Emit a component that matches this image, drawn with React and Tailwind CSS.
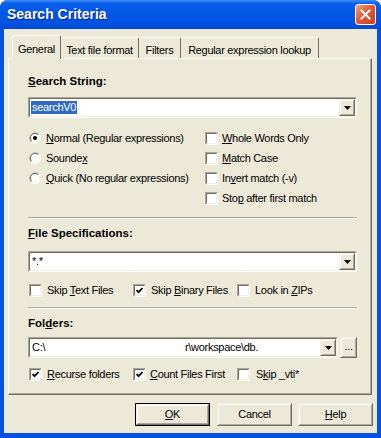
import React from 'react';

function Sunken({ className = '', children }) {
  return (
    <div className={`border border-t-[#ACA899] border-l-[#ACA899] border-b-white border-r-white ${className}`}>
      <div className="h-full w-full border border-t-[#716F64] border-l-[#716F64] border-b-[#F1EFE2] border-r-[#F1EFE2] bg-white">
        {children}
      </div>
    </div>
  );
}

function Raised({ className = '', children }) {
  return (
    <div className={`border border-t-[#F1EFE2] border-l-[#F1EFE2] border-b-[#716F64] border-r-[#716F64] bg-[#ECE9D8] ${className}`}>
      <div className="flex h-full w-full items-center justify-center border border-t-white border-l-white border-b-[#ACA899] border-r-[#ACA899]">
        {children}
      </div>
    </div>
  );
}

function Arrow() {
  return (
    <svg width="7" height="4" viewBox="0 0 7 4">
      <polygon points="0,0 7,0 3.5,4" fill="#000" />
    </svg>
  );
}

function Combo({ className = '', children }) {
  return (
    <Sunken className={`h-[21px] ${className}`}>
      <div className="flex h-full items-center">
        <div className="flex h-full flex-1 items-center overflow-hidden pl-[1px]">{children}</div>
        <Raised className="h-[17px] w-[16px]">
          <Arrow />
        </Raised>
      </div>
    </Sunken>
  );
}

function Radio({ checked }) {
  return (
    <svg width="12" height="12" viewBox="0 0 12 12" className="shrink-0">
      <circle cx="6" cy="6" r="6" fill="#fff" />
      <path d="M10.24 1.76 A6 6 0 0 0 1.76 10.24 Z" fill="#ACA899" />
      <circle cx="6" cy="6" r="5" fill="#F1EFE2" />
      <path d="M9.54 2.46 A5 5 0 0 0 2.46 9.54 Z" fill="#716F64" />
      <circle cx="6" cy="6" r="4" fill="#fff" />
      {checked && <circle cx="6" cy="6" r="2" fill="#000" />}
    </svg>
  );
}

function Check({ checked }) {
  return (
    <Sunken className="h-[13px] w-[13px] shrink-0">
      <div className="flex h-full w-full items-center justify-center">
        {checked && (
          <svg width="7" height="7" viewBox="0 0 7 7">
            <polyline points="0.5,3 2.5,5.2 6.5,1" fill="none" stroke="#000" strokeWidth="1.8" />
          </svg>
        )}
      </div>
    </Sunken>
  );
}

function Separator() {
  return <div className="h-[2px] border-t border-t-[#ACA899] border-b border-b-white" />;
}

export default function App() {
  return (
    <div className="flex h-[438px] w-[381px] flex-col overflow-hidden rounded-t-[8px] bg-[#0352E0] font-['Liberation_Sans',Arial,sans-serif] text-[11px] tracking-[-0.3px] text-black">
      {/* title bar */}
      <div className="flex h-[29px] shrink-0 items-center justify-between bg-[linear-gradient(to_bottom,#3C8FF7_0%,#0A5FEA_12%,#0058E6_40%,#0054E3_75%,#0049D3_100%)] pl-[7px] pr-[5px]">
        <span className="text-[14px] font-bold tracking-normal text-white [text-shadow:1px_1px_0_#0A1F8C]">Search Criteria</span>
        <div className="flex h-[21px] w-[21px] items-center justify-center rounded-[3px] border border-white bg-[linear-gradient(135deg,#F5A283_0%,#E35A35_45%,#C9401E_100%)]">
          <svg width="11" height="11" viewBox="0 0 11 11">
            <path d="M1.5 1.5 L9.5 9.5 M9.5 1.5 L1.5 9.5" stroke="#fff" strokeWidth="2" strokeLinecap="square" />
          </svg>
        </div>
      </div>

      {/* client area */}
      <div className="mx-[4px] flex h-[404px] flex-col bg-[#ECE9D8]">
        {/* tab strip */}
        <div className="mt-[6px] flex h-[23px] items-end pl-[8px]">
          <div className="relative z-10 -mb-px flex h-[24px] w-[49px] items-start justify-center rounded-t-[2px] border-t border-l border-t-white border-l-white border-r border-r-[#716F64] bg-[#ECE9D8] pt-[5px]">
            General
          </div>
          <div className="flex h-[21px] w-[78px] items-start justify-center rounded-t-[2px] border-t border-t-white border-r border-r-[#716F64] pt-[4px]">
            Text file format
          </div>
          <div className="flex h-[21px] w-[42px] items-start justify-center rounded-t-[2px] border-t border-t-white border-r border-r-[#716F64] pt-[4px]">
            Filters
          </div>
          <div className="flex h-[21px] w-[138px] items-start justify-center rounded-t-[2px] border-t border-t-white border-r border-r-[#716F64] pt-[4px]">
            Regular expression lookup
          </div>
        </div>

        {/* tab panel */}
        <div className="ml-[4px] flex h-[337px] w-[364px] flex-col border border-t-white border-l-white border-r-[#716F64] border-b-[#716F64] pl-[19px] pr-[14px] shadow-[inset_-1px_-1px_0_#ACA899]">
          <div className="mt-[15px] h-[14px] text-[11.5px] font-bold leading-[14px] tracking-normal">
            <u>S</u>earch String:
          </div>
          <Combo className="mt-[9px]">
            <span className="bg-[#316AC5] px-[1px] leading-[13px] text-white">searchV0</span>
          </Combo>

          <div className="mt-[10px] flex">
            <div className="flex w-[177px] flex-col">
              <div className="flex h-[20px] items-center pl-[1px]">
                <Radio checked />
                <span className="ml-[5px]"><u>N</u>ormal (Regular expressions)</span>
              </div>
              <div className="flex h-[20px] items-center pl-[1px]">
                <Radio />
                <span className="ml-[5px]">Sounde<u>x</u></span>
              </div>
              <div className="flex h-[20px] items-center pl-[1px]">
                <Radio />
                <span className="ml-[5px]"><u>Q</u>uick (No regular expressions)</span>
              </div>
            </div>
            <div className="flex flex-col">
              <div className="flex h-[20px] items-center">
                <Check />
                <span className="ml-[4px]"><u>W</u>hole Words Only</span>
              </div>
              <div className="flex h-[20px] items-center">
                <Check />
                <span className="ml-[4px]"><u>M</u>atch Case</span>
              </div>
              <div className="flex h-[20px] items-center">
                <Check />
                <span className="ml-[4px]">In<u>v</u>ert match (-v)</span>
              </div>
              <div className="flex h-[20px] items-center">
                <Check />
                <span className="ml-[4px]">Sto<u>p</u> after first match</span>
              </div>
            </div>
          </div>

          <div className="mt-[9px]">
            <Separator />
          </div>

          <div className="mt-[7px] h-[14px] text-[11.5px] font-bold leading-[14px] tracking-normal">
            <u>F</u>ile Specifications:
          </div>
          <Combo className="mt-[11px]">
            <span className="pl-[1px]">*.*</span>
          </Combo>

          <div className="mt-[10px] flex h-[16px] items-center">
            <div className="flex w-[104px] items-center pl-[1px]">
              <Check />
              <span className="ml-[5px]">Skip <u>T</u>ext Files</span>
            </div>
            <div className="flex w-[104px] items-center pl-[1px]">
              <Check checked />
              <span className="ml-[5px]">Skip <u>B</u>inary Files</span>
            </div>
            <div className="flex items-center pl-[1px]">
              <Check />
              <span className="ml-[5px]">Look in <u>Z</u>IPs</span>
            </div>
          </div>

          <div className="mt-[9px]">
            <Separator />
          </div>

          <div className="mt-[7px] h-[14px] text-[11.5px] font-bold leading-[14px] tracking-normal">
            Fol<u>d</u>ers:
          </div>
          <div className="mt-[7px] flex items-center">
            <Combo className="w-[312px]">
              <span className="w-[154px] pl-[1px]">C:\</span>
              <span>r\workspace\db.</span>
            </Combo>
            <Raised className="ml-[2px] h-[21px] w-[17px]">
              <span className="pb-[3px] leading-none">...</span>
            </Raised>
          </div>

          <div className="mt-[8px] flex h-[16px] items-center">
            <div className="flex w-[104px] items-center pl-[1px]">
              <Check checked />
              <span className="ml-[5px]"><u>R</u>ecurse folders</span>
            </div>
            <div className="flex w-[104px] items-center pl-[1px]">
              <Check checked />
              <span className="ml-[4px]"><u>C</u>ount Files First</span>
            </div>
            <div className="flex items-center pl-[1px]">
              <Check />
              <span className="ml-[6px]">S<u>k</u>ip _vti*</span>
            </div>
          </div>
        </div>

        {/* buttons */}
        <div className="mt-[8px] flex justify-end gap-[6px] pr-[4px]">
          <div className="mr-[1px] h-[23px] w-[75px] border border-black">
            <Raised className="h-full w-full">
              <span><u>O</u>K</span>
            </Raised>
          </div>
          <Raised className="h-[23px] w-[75px]">
            <span>Cancel</span>
          </Raised>
          <Raised className="h-[23px] w-[75px]">
            <span><u>H</u>elp</span>
          </Raised>
        </div>
      </div>
    </div>
  );
}
